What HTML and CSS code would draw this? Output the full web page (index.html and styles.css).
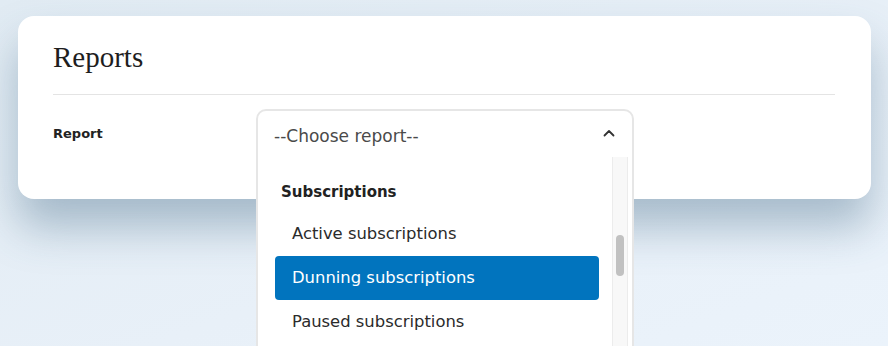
FILE: index.html
```html
<!DOCTYPE html>
<html lang="en">
<head>
  <meta charset="UTF-8" />
  <title>Reports</title>
  <meta name="viewport" content="width=device-width, initial-scale=1.0" />
  <link rel="stylesheet" href="styles.css">
</head>
<body>

  <div class="card">
    <h1>Reports</h1>

    <div class="form-row">
      <label class="form-label">Report</label>

      <div class="select-wrap">
        <div class="select-open">
          <div class="select-head">
            <span>--Choose report--</span>
            <svg class="chevron" width="12" height="8" viewBox="0 0 12 8">
              <path d="M1.5 6.5 L6 2 L10.5 6.5" fill="none" stroke="#333" stroke-width="1.8" stroke-linecap="round" stroke-linejoin="round"/>
            </svg>
          </div>

          <div class="select-list">
            <div class="options">
              <div class="group">Subscriptions</div>
              <div class="option">Active subscriptions</div>
              <div class="option active">Dunning subscriptions</div>
              <div class="option">Paused subscriptions</div>
            </div>
            <div class="track"><div class="thumb"></div></div>
          </div>
        </div>
      </div>
    </div>
  </div>

</body>
</html>
```

FILE: styles.css
```css
html, body {
  height: 100%;
}

body {
  margin: 0;
  padding: 16px 17px 0 18px;
  box-sizing: border-box;
  overflow: hidden;
  font-family: "DejaVu Sans", sans-serif;
  background: linear-gradient(160deg, #e1ebf3 0%, #e8f0f8 60%, #ebf3fb 100%);
}

.card {
  height: 183px;
  box-sizing: border-box;
  padding: 0 36px 0 35px;
  background: white;
  border-radius: 16px;
  box-shadow: 0 28px 44px rgba(60, 100, 130, 0.38);
}

h1 {
  margin: 0;
  padding: 25px 0 21px;
  font-family: "Liberation Serif", serif;
  font-weight: normal;
  font-size: 29px;
  line-height: 32px;
  color: #1e1e1e;
  border-bottom: 1px solid #e4e4e4;
}

.form-row {
  display: flex;
  margin-top: 14px;
}

.form-label {
  width: 203px;
  padding-top: 17px;
  font-size: 13px;
  font-weight: bold;
  color: #222;
}

.select-wrap {
  position: relative;
  width: 378px;
  height: 48px;
}

.select-open {
  position: absolute;
  top: 0;
  left: 0;
  width: 100%;
  height: 260px;
  box-sizing: border-box;
  border: 2px solid #e6e6e6;
  border-radius: 10px;
  background: white;
  display: flex;
  flex-direction: column;
}

.select-head {
  height: 46px;
  display: flex;
  align-items: center;
  justify-content: space-between;
  padding: 4px 17px 0 16px;
  box-sizing: border-box;
  font-size: 17px;
  color: #4a4a4a;
}

.chevron {
  margin-top: -6px;
}

.select-list {
  flex: 1;
  display: flex;
}

.options {
  flex: 1;
  padding: 15px 13px 0 17px;
}

.group {
  line-height: 40px;
  padding-left: 6px;
  font-size: 15px;
  font-weight: bold;
  color: #222;
}

.option {
  height: 44px;
  line-height: 44px;
  padding-left: 17px;
  font-size: 16.4px;
  color: #2b2b2b;
  border-radius: 4px;
}

.option.active {
  background: #0174be;
  color: white;
}

.track {
  width: 14px;
  margin-right: 4px;
  background: #f8f8f8;
  border-left: 1px solid #ececec;
  border-right: 1px solid #ececec;
}

.thumb {
  width: 8px;
  height: 41px;
  margin: 78px 0 0 3px;
  background: #c1c1c1;
  border-radius: 4px;
}
```
